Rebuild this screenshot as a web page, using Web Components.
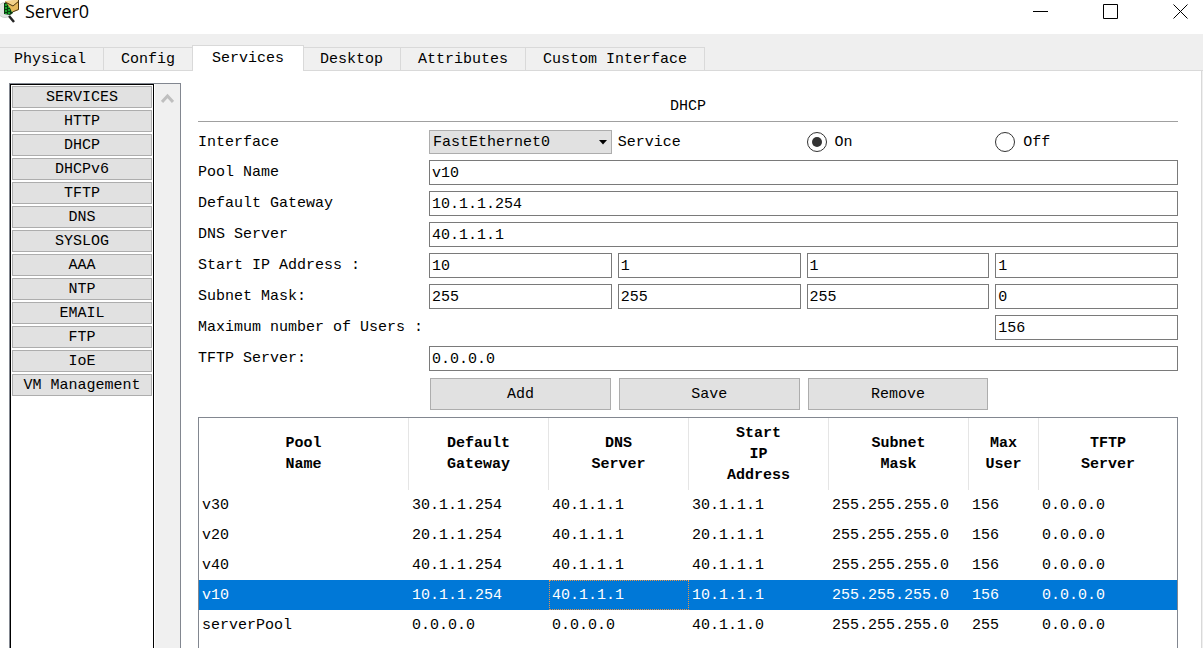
<!DOCTYPE html>
<html lang="en">
<head>
<meta charset="utf-8">
<meta name="viewport" content="width=device-width, initial-scale=1">
<title>Server0</title>
<style>
  html, body {
    margin: 0;
    height: 100%;
  }

  body {
    font: 15px/21px "Liberation Mono", monospace;
    color: #000;
    background: #efefef;
  }
</style>
</head>
<body>
<device-window>
  <window-title slot="title">Server0</window-title>
  <config-tabs slot="tabs" active="Services"></config-tabs>
  <service-list slot="side"></service-list>
  <dhcp-form></dhcp-form>
  <pool-table></pool-table>
</device-window>

<script>
class DeviceWindow extends HTMLElement {
  constructor() {
    super();
    this.attachShadow({ mode: "open" });

    this.shadowRoot.innerHTML = `
      <style>
        :host {
          display: flex;
          flex-direction: column;
          min-height: 100%;
        }

        .panel {
          flex: 1;
          display: flex;
          gap: 17px;
          margin-right: 1px;
          padding: 12px 23px 0 9px;
          border-right: 1px solid #d9d9d9;
          background: #fff;
        }

        main {
          flex: 1;
          min-width: 0;
          display: flex;
          flex-direction: column;
        }
      </style>

      <slot name="title"></slot>
      <slot name="tabs"></slot>
      <div class="panel">
        <slot name="side"></slot>
        <main><slot></slot></main>
      </div>
    `;
  }
}

class WindowTitle extends HTMLElement {
  constructor() {
    super();
    this.attachShadow({ mode: "open" });

    this.shadowRoot.innerHTML = `
      <style>
        :host {
          display: flex;
          align-items: flex-start;
          height: 34px;
          background: #fff;
        }

        .logo {
          width: 20px;
          height: 24px;
          margin-right: 5px;
        }

        h1 {
          flex: 1;
          margin: 0;
          font: 400 18px/22px "Open Sans", sans-serif;
        }

        .controls {
          display: flex;
          gap: 24px;
        }

        button {
          width: 46px;
          height: 24px;
          padding: 0;
          border: 0;
          background: none;
        }

        button svg {
          display: block;
          margin-left: 16px;
          fill: none;
          stroke: #000;
        }
      </style>

      <svg class="logo" viewBox="0 0 20 24" aria-hidden="true">
        <circle cx="5" cy="10" r="7.500" fill="#e2e6e4" stroke="#ccd0ce"/>
        <path d="M4 3h4l4 4 1 6-3 2-6-1z" fill="#0a3a10"/>
        <path d="M5 4h2v2H5zM8 6h2v2H8zM5 7h2v2H5zM8 9h2v2H8zM5 10h2v2H5zM11 10h1v2h-1zM5 13h2v1H5zM8 12h2v2H8z" fill="#18a52c"/>
        <path d="M5 1l14-1v10l-7 2-2-4z" fill="#e6b95c"/>
        <path d="M5 1l14-1-6 6z" fill="#f3d28a"/>
        <path d="M5 2l8 4 6-5" fill="none" stroke="#4a3510"/>
        <path d="M18.500 0v9.500l-6 2.500" fill="none" stroke="#4a3510"/>
        <path d="M9 16l5 6" stroke="#252525" stroke-width="2.500"/>
      </svg>
      <h1><slot></slot></h1>
      <div class="controls">
        <button aria-label="Minimize"><svg width="16" height="24"><path d="M0 11.500h15"/></svg></button>
        <button aria-label="Maximize"><svg width="16" height="24"><path d="M.5 4.500h14v14H.5z"/></svg></button>
        <button aria-label="Close"><svg width="16" height="24"><path d="M.5 4.500l14 14M14.500 4.500l-14 14"/></svg></button>
      </div>
    `;
  }
}

class ConfigTabs extends HTMLElement {
  constructor() {
    super();
    this.attachShadow({ mode: "open" });
    this._tabs = ["Physical", "Config", "Services", "Desktop", "Attributes", "Custom Interface"];
  }

  connectedCallback() {
    const active = this.getAttribute("active");

    this.shadowRoot.innerHTML = `
      <style>
        :host {
          display: flex;
          align-items: flex-end;
          height: 37px;
          overflow: hidden;
          /* baseline of the strip, covered by the active tab */
          box-shadow: inset 0 -1px #d9d9d9;
        }

        nav {
          display: flex;
          align-items: flex-end;
          margin-left: -3px;
        }

        button {
          height: 24px;
          padding: 0 17px;
          border: solid #d9d9d9;
          border-width: 1px 1px 1px 0;
          background: #f0f0f0;
          color: inherit;
          font: inherit;
          white-space: nowrap;
        }

        button[aria-selected="true"] {
          z-index: 1;
          height: 26px;
          margin: 0 -1px;
          padding: 0 19px 1px;
          border-width: 1px 1px 0;
          background: #fff;
        }
      </style>

      <nav role="tablist">
        ${this._tabs.map((t) => `<button role="tab" aria-selected="${t === active}">${t}</button>`).join("")}
      </nav>
    `;
  }
}

class ServiceList extends HTMLElement {
  constructor() {
    super();
    this.attachShadow({ mode: "open" });

    const services = [
      "SERVICES", "HTTP", "DHCP", "DHCPv6", "TFTP", "DNS", "SYSLOG",
      "AAA", "NTP", "EMAIL", "FTP", "IoE", "VM Management",
    ];

    this.shadowRoot.innerHTML = `
      <style>
        :host {
          display: flex;
          flex: none;
          border: 1px solid #828790;
          border-bottom: 0;
        }

        .list {
          display: flex;
          flex-direction: column;
          gap: 2px;
          width: 140px;
          padding: 1px;
          border: 1px solid #000;
          border-bottom: 0;
        }

        button {
          height: 22px;
          padding: 1px 0 0;
          border: 1px solid #adadad;
          background: #e1e1e1;
          color: inherit;
          font: inherit;
          line-height: 19px;
        }

        .scroll {
          width: 25px;
          margin-left: 1px;
          background: #f0f0f0;
        }

        .scroll svg {
          display: block;
          margin: 9px auto 0;
        }
      </style>

      <div class="list">
        ${services.map((s) => `<button>${s}</button>`).join("")}
      </div>
      <div class="scroll">
        <svg width="13" height="11" fill="none" stroke="#bfbfbf" stroke-width="3"><path d="M1 9l5.500-6L12 9"/></svg>
      </div>
    `;
  }
}

class DhcpForm extends HTMLElement {
  constructor() {
    super();
    this.attachShadow({ mode: "open" });

    this.shadowRoot.innerHTML = `
      <style>
        :host {
          display: block;
        }

        h2 {
          margin: 0 0 8px;
          padding: 13px 0 4px;
          border-bottom: 1px solid #a0a0a0;
          font: inherit;
          text-align: center;
        }

        form {
          display: grid;
          grid-template-columns: auto repeat(4, minmax(0, 1fr));
          gap: 6px;
          align-items: center;
        }

        label {
          white-space: nowrap;
        }

        .first {
          grid-column: 1;
        }

        .wide {
          grid-column: 2 / -1;
        }

        .last {
          grid-column: 5;
        }

        input[type="text"] {
          box-sizing: border-box;
          width: 100%;
          height: 25px;
          padding: 1px 2px 0;
          border: 1px solid #7a7a7a;
          background: #fff;
          color: inherit;
          font: inherit;
        }

        .select {
          position: relative;
        }

        select {
          appearance: none;
          display: block;
          width: 100%;
          height: 24px;
          padding: 0 3px;
          border: 1px solid #adadad;
          border-radius: 0;
          background: #e1e1e1;
          color: inherit;
          font: inherit;
        }

        .select svg {
          position: absolute;
          top: 10px;
          right: 5px;
          pointer-events: none;
        }

        .radio {
          display: flex;
          align-items: center;
          gap: 8px;
        }

        input[type="radio"] {
          appearance: none;
          box-sizing: border-box;
          width: 20px;
          height: 20px;
          margin: 0;
          border: 1px solid #333;
          border-radius: 50%;
          background: #fff;
        }

        input[type="radio"]:checked {
          padding: 4px;
          background: #333 content-box;
        }

        button {
          height: 32px;
          margin: 1px;
          padding: 0;
          border: 1px solid #adadad;
          background: #e1e1e1;
          color: inherit;
          font: inherit;
        }

        .add {
          grid-column: 2;
        }
      </style>

      <h2>DHCP</h2>
      <form>
        <label class="first" for="iface">Interface</label>
        <div class="select">
          <select id="iface"><option>FastEthernet0</option></select>
          <svg width="8" height="5"><path d="M0 0h8L4 4.500z"/></svg>
        </div>
        <span>Service</span>
        <label class="radio"><input type="radio" name="service" checked>On</label>
        <label class="radio"><input type="radio" name="service">Off</label>

        <label class="first" for="pool">Pool Name</label>
        <input class="wide" type="text" id="pool" value="v10">

        <label class="first" for="gateway">Default Gateway</label>
        <input class="wide" type="text" id="gateway" value="10.1.1.254">

        <label class="first" for="dns">DNS Server</label>
        <input class="wide" type="text" id="dns" value="40.1.1.1">

        <label class="first" for="ip1">Start IP Address :</label>
        ${this._octets("ip", "Start IP Address", [10, 1, 1, 1])}

        <label class="first" for="mask1">Subnet Mask:</label>
        ${this._octets("mask", "Subnet Mask", [255, 255, 255, 0])}

        <label class="first" for="users">Maximum number of Users :</label>
        <input class="last" type="text" id="users" value="156">

        <label class="first" for="tftp">TFTP Server:</label>
        <input class="wide" type="text" id="tftp" value="0.0.0.0">

        <button class="add" type="button">Add</button>
        <button type="button">Save</button>
        <button type="button">Remove</button>
      </form>
    `;
  }

  /**
   * One text box per octet of an address.
   * @private
   */
  _octets(id, name, values) {
    return values
      .map((v, i) => `<input type="text" id="${id}${i + 1}" aria-label="${name} ${i + 1}" value="${v}">`)
      .join("");
  }
}

class PoolTable extends HTMLElement {
  constructor() {
    super();
    this.attachShadow({ mode: "open" });

    const heads = [
      "Pool<br>Name", "Default<br>Gateway", "DNS<br>Server", "Start<br>IP<br>Address",
      "Subnet<br>Mask", "Max<br>User", "TFTP<br>Server",
    ];
    const pools = [
      ["v30", "30.1.1.254", "40.1.1.1", "30.1.1.1", "255.255.255.0", "156", "0.0.0.0"],
      ["v20", "20.1.1.254", "40.1.1.1", "20.1.1.1", "255.255.255.0", "156", "0.0.0.0"],
      ["v40", "40.1.1.254", "40.1.1.1", "40.1.1.1", "255.255.255.0", "156", "0.0.0.0"],
      ["v10", "10.1.1.254", "40.1.1.1", "10.1.1.1", "255.255.255.0", "156", "0.0.0.0"],
      ["serverPool", "0.0.0.0", "0.0.0.0", "40.1.1.0", "255.255.255.0", "255", "0.0.0.0"],
    ];
    const selected = 3;

    this.shadowRoot.innerHTML = `
      <style>
        :host {
          display: block;
          flex: 1;
          margin-top: 6px;
          border: 1px solid #828790;
          border-bottom: 0;
        }

        table {
          width: 100%;
          table-layout: fixed;
          border-collapse: separate;
          border-spacing: 0;
        }

        .name { width: 210px; }
        .address { width: 140px; }
        .count { width: 70px; }

        th {
          height: 72px;
          padding: 0;
          border-right: 1px solid #e5e5e5;
        }

        th:last-child {
          border-right: 0;
        }

        td {
          box-sizing: border-box;
          height: 30px;
          padding: 0 3px;
          white-space: nowrap;
        }

        .selected {
          background: #0078d7;
          color: #fff;
        }

        .current {
          padding: 0 2px;
          border: 1px dotted #e8944a;
        }
      </style>

      <table>
        <colgroup>
          <col class="name"><col class="address" span="4"><col class="count"><col>
        </colgroup>
        <thead>
          <tr>${heads.map((h) => `<th>${h}</th>`).join("")}</tr>
        </thead>
        <tbody>
          ${pools.map((row, r) => `
            <tr${r === selected ? ` class="selected"` : ""}>
              ${row.map((cell, c) => `<td${r === selected && c === 2 ? ` class="current"` : ""}>${cell}</td>`).join("")}
            </tr>`).join("")}
        </tbody>
      </table>
    `;
  }
}

customElements.define("device-window", DeviceWindow);
customElements.define("window-title", WindowTitle);
customElements.define("config-tabs", ConfigTabs);
customElements.define("service-list", ServiceList);
customElements.define("dhcp-form", DhcpForm);
customElements.define("pool-table", PoolTable);
</script>
</body>
</html>
